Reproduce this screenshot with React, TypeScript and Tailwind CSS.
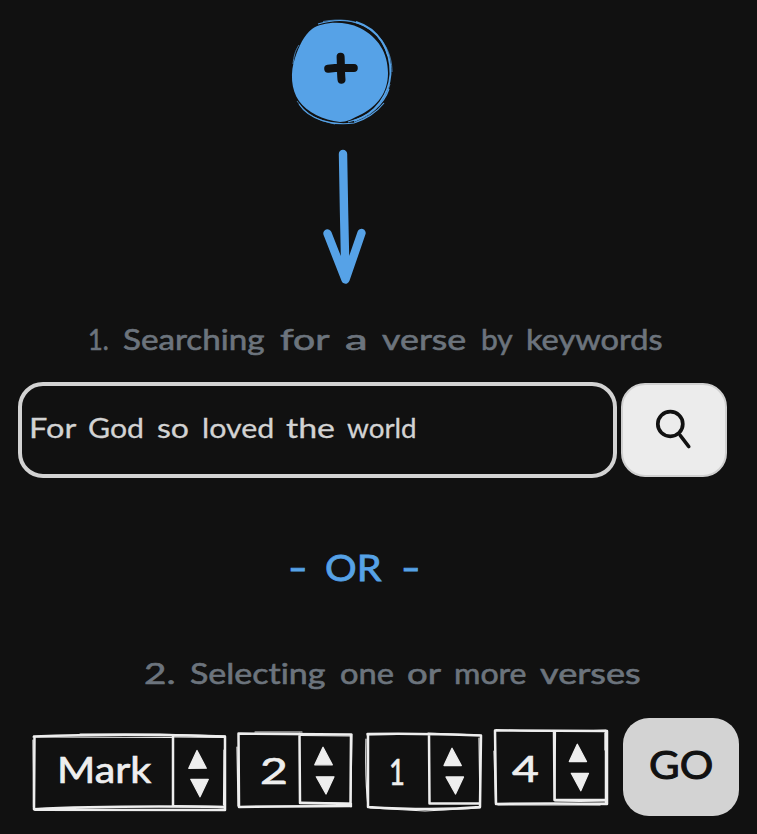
import { useLayoutEffect, useRef, useState } from "react";

type WordProps = { text: string; width: number };

// A word stretched sideways until it fills the given width, for a loose hand-lettered rhythm.
function Word({ text, width }: WordProps) {
  const ref = useRef<HTMLSpanElement>(null);
  const [stretch, setStretch] = useState(1);
  useLayoutEffect(() => {
    if (ref.current) setStretch(width / ref.current.offsetWidth);
  }, [text, width]);
  return (
    <span className="block shrink-0" style={{ width }}>
      <span ref={ref} className="inline-block origin-left whitespace-pre" style={{ transform: `scaleX(${stretch})` }}>
        {text}
      </span>
    </span>
  );
}

type Placed = [text: string, gap: number, width: number];

function Line({ words, className }: { words: Placed[]; className: string }) {
  return (
    <div className={`flex whitespace-nowrap ${className}`}>
      {words.map(([text, gap, width], i) => (
        <span key={i} className="block" style={{ marginLeft: gap }}>
          <Word text={text} width={width} />
        </span>
      ))}
    </div>
  );
}

type SelectProps = {
  value: string;
  valueWidth: number;
  box: string;
  className: string;
  valueClass: string;
  bold: string;
  thin: string;
  arrows: string;
};

function Stepper({ value, valueWidth, box, className, valueClass, bold, thin, arrows }: SelectProps) {
  return (
    <div className={`relative h-[98px] shrink-0 ${className}`}>
      <svg viewBox={box} className="absolute inset-0 h-full w-full" fill="none" stroke="#eeeeee" strokeLinecap="round" strokeLinejoin="round">
        <path d={bold} strokeWidth="2.5" />
        <path d={thin} strokeWidth="1.2" />
        <path d={arrows} fill="#eeeeee" strokeWidth="1.3" />
      </svg>
      <div className={`relative text-[36px] leading-[44px] text-[#eeeeee] [-webkit-text-stroke:0.7px_#eeeeee] ${valueClass}`}>
        <Word text={value} width={valueWidth} />
      </div>
    </div>
  );
}

export default function App() {
  return (
    <main className="flex h-[834px] w-[757px] flex-col overflow-hidden bg-[#111111] font-['Lato',sans-serif] [font-variant-ligatures:none]">
      <button aria-label="Add" className="ml-[287px] mt-[16px] block h-[114px] w-[110px] shrink-0">
        <svg viewBox="287 16 110 114" className="block h-full w-full" fill="none">
          <path d="M312 29C322 22 343 20 360 28C378 37 388 53 388 73C388 93 377 106 362 114C352 119 347 122 340 122C323 120 307 112 299 101C291 90 290 72 295 58C299 46 304 35 312 29Z" fill="#56a2e7" />
          <path d="M356 22C379 29 391 50 390.5 74C389 94 377 113 354 121" stroke="#56a2e7" strokeWidth="1.9" />
          <path d="M318 24C334 19 349 20 360 24C375 30 384 42 388 56M389 89C384 104 370 117 348 122M299 104C309 120 333 126 354 123C365 120 377 112 384 103" stroke="#56a2e7" strokeWidth="1.1" />
          <path d="M323 21.5C339 18.5 356 20 367 27C384 38 392 54 392 72M297 101C306 115 320 121 335 124M293 64C294 56 295 51 299 45M390 84C386 101 372 116 356 122" stroke="#56a2e7" strokeWidth="0.7" />
          <path d="M340.6 56.8C341 63 340.7 71 341.5 79.7M328.2 68.8C338 67 345 67.5 353.8 68" stroke="#111111" strokeWidth="8" strokeLinecap="round" />
        </svg>
      </button>

      <svg viewBox="318 146 56 144" className="ml-[318px] mt-[16px] h-[144px] w-[56px] shrink-0" fill="none" stroke="#56a2e7" strokeWidth="8.4" strokeLinecap="round" strokeLinejoin="round">
        <path d="M343 154L344 210L345.5 279M327.5 233.5L345.5 279.5L361.5 233" />
      </svg>

      <Line
        className="ml-[88px] mt-[29px] h-[40px] shrink-0 text-[29px] leading-[40px] text-[#6c747d] [-webkit-text-stroke:0.6px_#6c747d]"
        words={[["1.", 0, 21], ["Searching", 14, 142], ["for", 15, 50], ["a", 15, 22], ["verse", 15, 84], ["by", 15, 32], ["keywords", 13, 137]]}
      />

      <div className="ml-[18px] mt-[23px] flex h-[96px] shrink-0">
        <div className="h-[96px] w-[599px] shrink-0 rounded-[25px] border-4 border-[#d3d3d3]">
          <Line
            className="ml-[7px] mt-[22px] text-[27px] leading-[40px] text-[#d3d3d3] [-webkit-text-stroke:0.3px_#d3d3d3]"
            words={[["For", 0, 47], ["God", 12, 56], ["so", 13, 32], ["loved", 13, 72], ["the", 12, 49], ["world", 12, 70]]}
          />
        </div>
        <button aria-label="Search" className="ml-[4px] mt-px h-[94px] w-[106px] rounded-[24px] border-2 border-[#d0d0d0] bg-[#ececec]">
          <svg viewBox="623 385 102 90" className="h-full w-full" fill="none" stroke="#111111" strokeWidth="3.7" strokeLinecap="round">
            <ellipse cx="670.3" cy="424" rx="12.5" ry="12.3" />
            <path d="M680.3 435.5L688.7 446.5" />
          </svg>
        </button>
      </div>

      <Line
        className="ml-[288px] mt-[67px] h-[44px] shrink-0 text-[36px] leading-[44px] text-[#56a2e7] [-webkit-text-stroke:0.8px_#56a2e7]"
        words={[["-", 0, 19], ["OR", 18, 56], ["-", 20, 19]]}
      />

      <Line
        className="ml-[144px] mt-[64px] h-[40px] shrink-0 text-[29px] leading-[40px] text-[#6c747d] [-webkit-text-stroke:0.6px_#6c747d]"
        words={[["2.", 0, 32], ["Selecting", 14, 136], ["one", 14, 54], ["or", 13, 34], ["more", 13, 73], ["verses", 13, 101]]}
      />

      <div className="ml-[30px] mt-[25px] flex h-[98px] shrink-0">
        <Stepper
          value="Mark" valueWidth={94} box="30 718 200 98" className="w-[200px]" valueClass="ml-[27px] mt-[29px]"
          bold="M34.5 736.5L34 809M34 736.5Q120 733 225 736.5L225 810M34 809.3Q100 805.5 225 807M173 736L173 805M35 809.8L225 810"
          thin="M33 740L33.5 807M80 734L160 734L225 736M174 737L225 737.5M173 805.5L225 806.5M194 806L225 808M33 737L173 737.5M224 750L223.5 805"
          arrows="M197 750.5L188.8 768.3L206.3 768.2ZM190.8 779.3L208.3 779.3L200 796.8Z"
        />
        <Stepper
          value="2" valueWidth={28} box="235 718 120 98" className="ml-[5px] w-[120px]" valueClass="ml-[25px] mt-[30px]"
          bold="M238.5 733.5L239 807L351 806M238.5 733.5L351 734.5L350.5 803M299.5 734L300 803L351 804"
          thin="M237 747L238 806M255 732L302 732M300 735.5L350 736M240 806.5L351 805.5M301 802L350 803M352 734L350.7 805.5L351 807"
          arrows="M323 747.3L314.8 764.8L332.3 764.8ZM316.3 776.8L334 776.8L326 794Z"
        />
        <Stepper
          value="1" valueWidth={16} box="363 718 122 98" className="ml-[8px] w-[122px]" valueClass="ml-[26px] mt-[31px]"
          bold="M368 734L368 807M367.5 734Q420 733 481 735.5L480 807M429 735L429.5 803.5L480 803.5M368 807Q435 811 480 807"
          thin="M366 739Q365 780 368 807M367 735L428 734M428 733L480 735M479 738L480 806M370 808L425 811L480 808"
          arrows="M452 748.3L444 765.5L461.3 765.5ZM446 777L463.5 777L455.5 794Z"
        />
        <Stepper
          value="4" valueWidth={27} box="491 718 120 98" className="ml-[6px] w-[120px]" valueClass="ml-[21px] mt-[28px]"
          bold="M495 730.5L496 804M495 730.5L607 731L607 804M554 731L554.5 800L607 800M496 804Q555 803 607 804M606 731L606 802"
          thin="M494 751L495.5 803M496 729.5Q550 733 606 730M555 801L605 802M605 733L605 750M555.5 732L555 799M498 805L600 805"
          arrows="M577.3 744.3L569.3 761.5L586.5 761.5ZM571.3 773.3L588.5 773.3L580.8 790.7Z"
        />
        <button className="ml-[12px] flex h-[98px] w-[116px] shrink-0 rounded-[26px] bg-[#d3d3d3] pl-[26px] pt-[24px] text-left text-[38px] leading-[44px] text-[#111111] [-webkit-text-stroke:1px_#111111]">
          <Word text="GO" width={64} />
        </button>
      </div>
    </main>
  );
}
